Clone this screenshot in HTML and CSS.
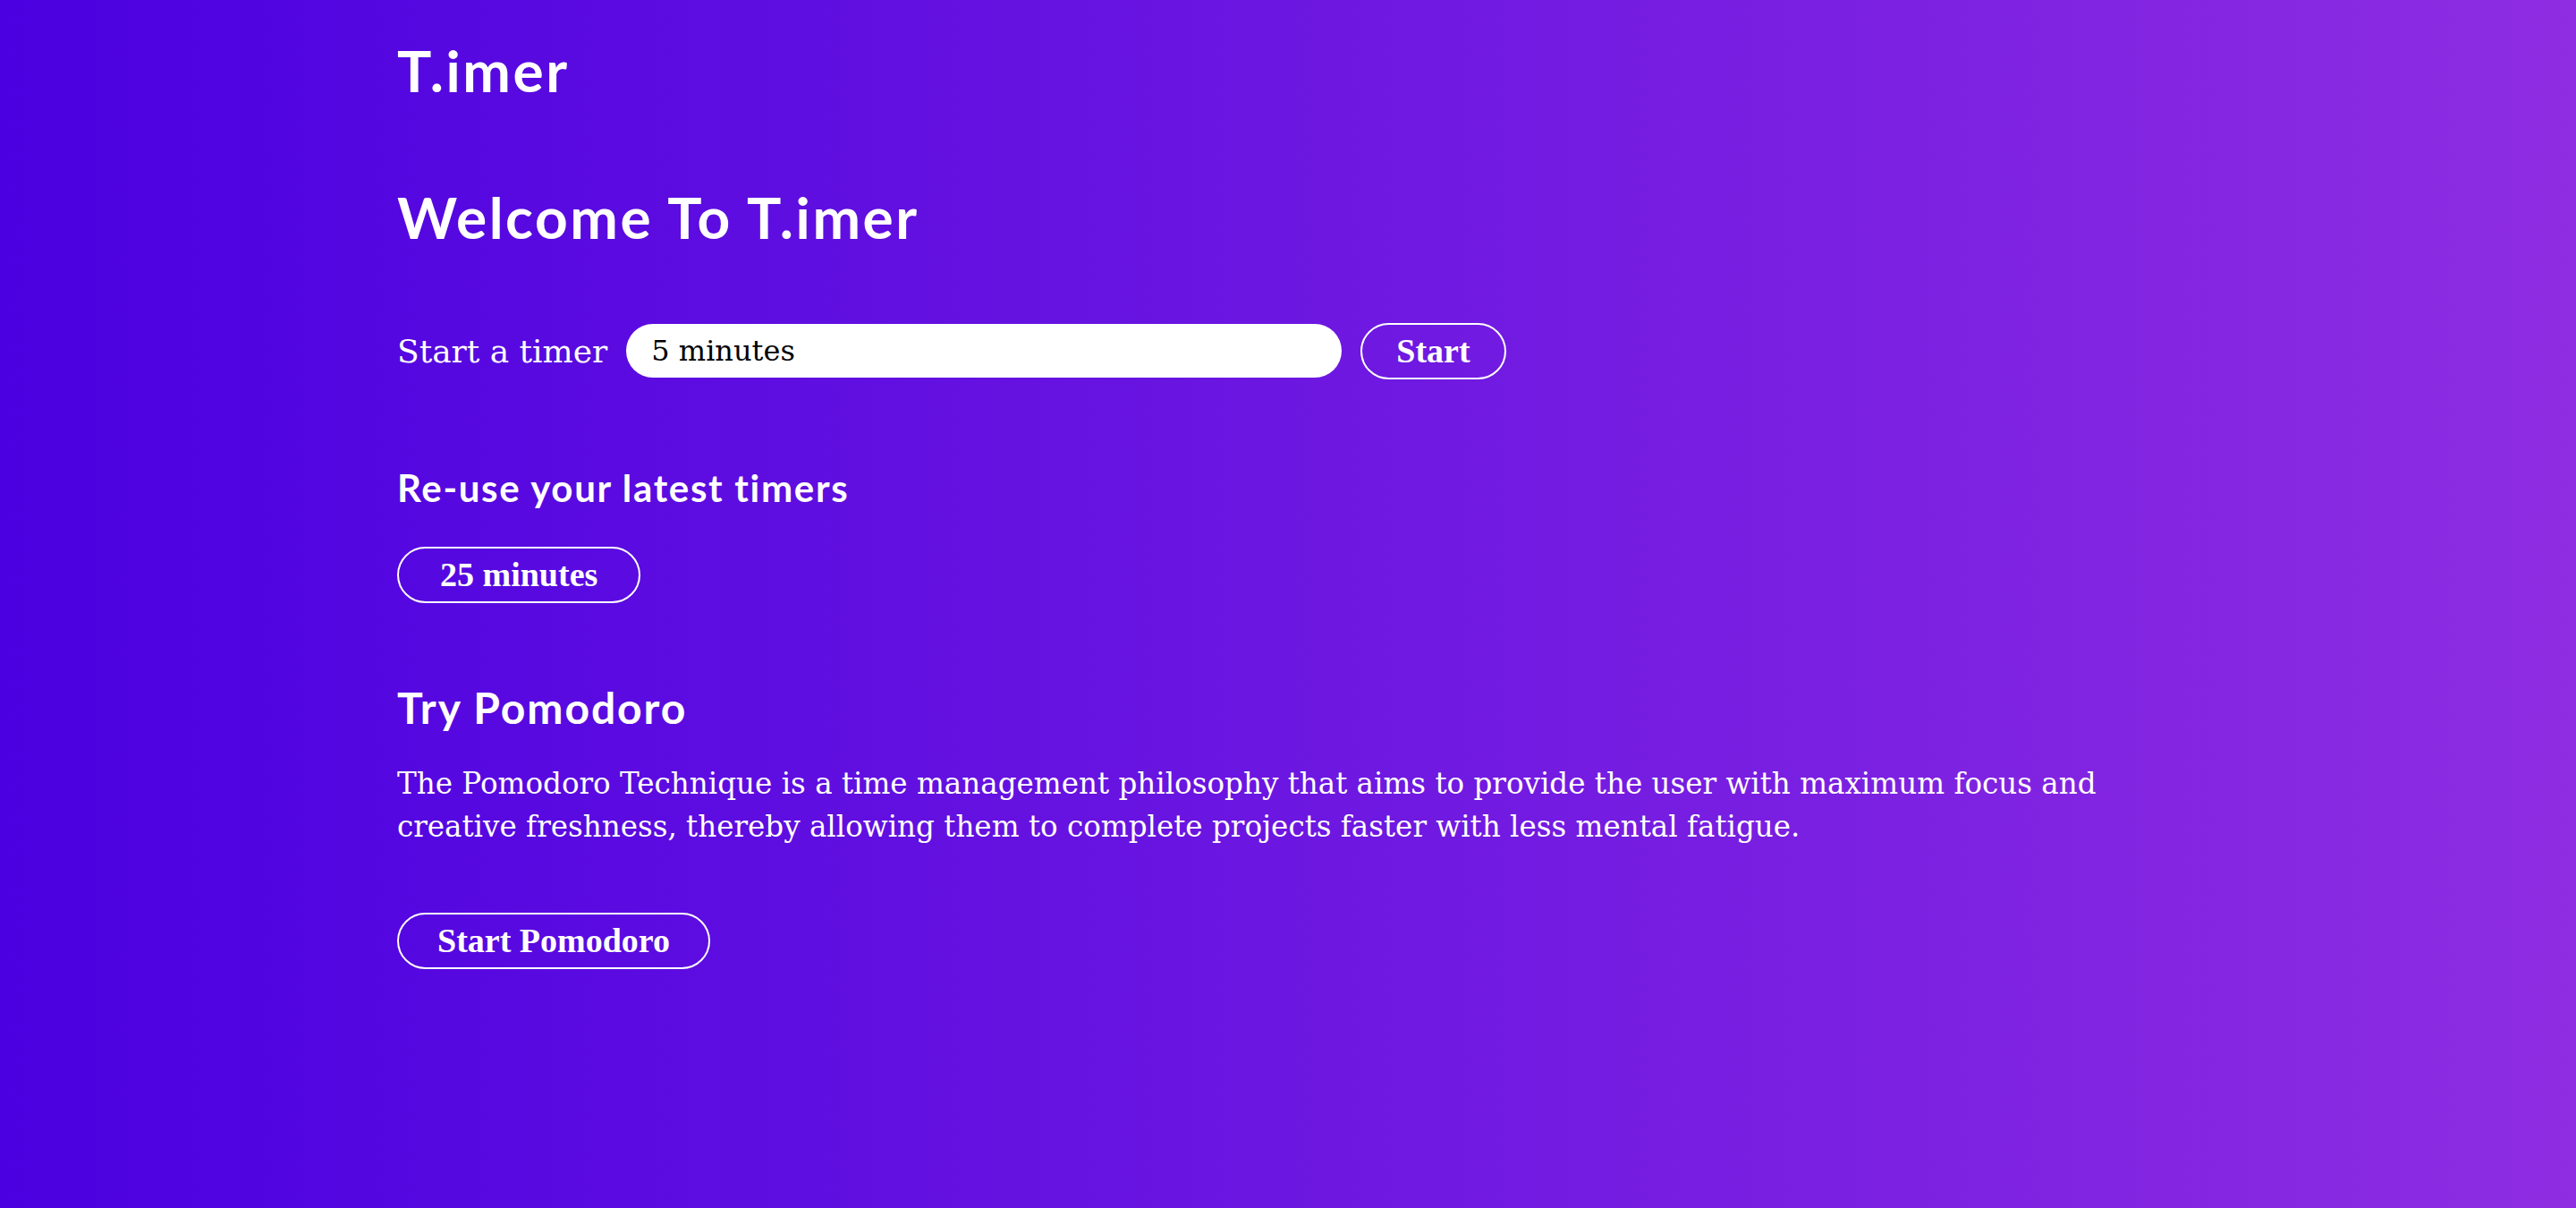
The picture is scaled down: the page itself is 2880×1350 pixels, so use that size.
FILE: index.html
```html
<!DOCTYPE html>
<html lang="en">
<head>
<meta charset="UTF-8">
<title>T.imer</title>
<link rel="stylesheet" href="styles.css">
</head>
<body>

<!-- ░░ page ░░ -->
<div id="page">
  <header class="brand">T.imer</header>

  <h1 class="welcome">Welcome To T.imer</h1>

  <!-- new timer -->
  <form id="newTimer" class="timerRow">
    <label for="timerInput">Start a timer</label>
    <input id="timerInput" type="text" value="5 minutes">
    <button type="button" class="pill">Start</button>
  </form>

  <!-- history -->
  <section class="latest">
    <h3>Re-use your latest timers</h3>
    <div id="latestList" class="pillList">
      <button type="button" class="pill">25 minutes</button>
    </div>
  </section>

  <!-- pomodoro -->
  <section class="pomodoro">
    <h2>Try Pomodoro</h2>
    <p>The Pomodoro Technique is a time management philosophy that aims to provide the user with maximum focus and creative freshness, thereby allowing them to complete projects faster with less mental fatigue.</p>
    <button type="button" class="pill">Start Pomodoro</button>
  </section>
</div>

</body>
</html>
```

FILE: styles.css
```css
/* ===== global ===== */
html,body{margin:0;min-height:100%}
body{
  min-height:100vh;color:#fff;
  background:linear-gradient(to right,#4a00e0,#8e2de2);
  font-family:"DejaVu Serif","Liberation Serif",serif;
}
#page{width:1992px;margin:0 auto;padding-top:41px}

/* ---------- headings ---------- */
.brand,.welcome,h2,h3{font-family:Lato,"Open Sans",sans-serif;font-weight:700;line-height:1.2;letter-spacing:.04em;margin:0}
.brand{font-size:64px}
.welcome{font-size:64px;margin-top:87px}
h3{font-size:42px}
h2{font-size:48px}

/* ---------- pill buttons ---------- */
.pill{
  font-family:"Liberation Serif",serif;font-weight:700;font-size:38px;line-height:45px;
  color:#fff;background:none;border:2px solid #fff;border-radius:40px;
  padding:7px 43px;cursor:pointer
}

/* ---------- start a timer ---------- */
.timerRow{display:flex;align-items:center;margin:79px 0 0}
.timerRow label{font-size:36px;margin-right:21px}
.timerRow input{
  width:800px;height:60px;box-sizing:border-box;border:none;border-radius:30px;
  padding:0 28px;font-family:inherit;font-size:32px;color:#000;background:#fff;outline:none
}
.timerRow .pill{margin-left:21px;padding:7px 38px}

/* ---------- latest ---------- */
.latest{margin-top:96px}
.pillList{display:flex;flex-wrap:wrap;gap:16px;margin-top:41px}
.pillList .pill{padding:7px 46px}

/* ---------- pomodoro ---------- */
.pomodoro{margin-top:88px}
.pomodoro p{font-size:32.6px;line-height:48px;margin:32px 0 72px}
```
